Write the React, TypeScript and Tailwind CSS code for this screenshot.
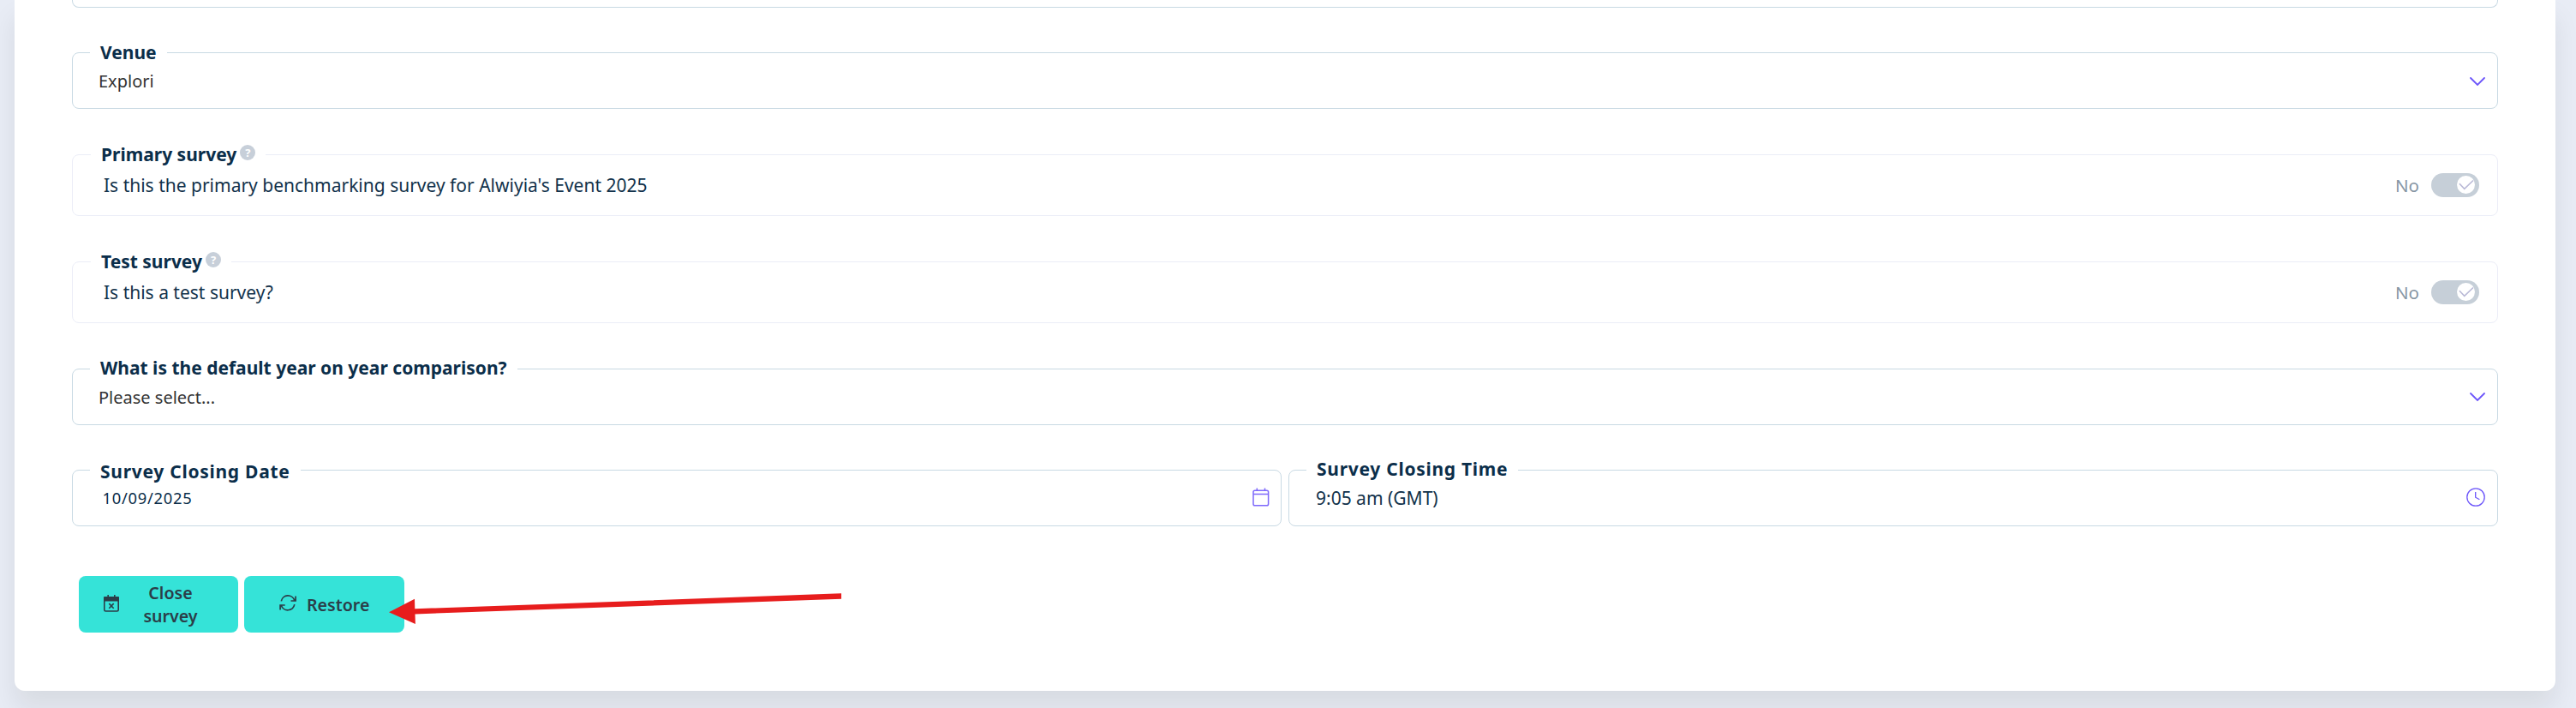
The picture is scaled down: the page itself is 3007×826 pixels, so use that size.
// src/components/sections/SurveySettings.tsx
import React from 'react';

type FieldProps = {
  label: string;
  labelClass?: string;
  className?: string;
  help?: boolean;
  children: React.ReactNode;
};

function Field({ label, labelClass = 'leading-[26px]', className = 'h-[79px] border-[#c8d9e3]', help, children }: FieldProps) {
  return (
    <fieldset className={`min-w-0 border rounded-lg ${className}`}>
      <legend className={`px-3 h-[27px] text-[21px] text-[#0b2e4a] ${help ? 'ml-[21px]' : 'ml-5'}`}>
        <span className="flex items-start h-[27px]">
          <span className={`whitespace-nowrap font-bold ${labelClass}`}>{label}</span>
          {help && (
            <span className="ml-1 mt-[2px] w-[18px] h-[18px] rounded-full bg-[#c7cfd9] text-white text-[13px] leading-[18px] font-bold text-center">
              ?
            </span>
          )}
        </span>
      </legend>
      {children}
    </fieldset>
  );
}

function Select({ value, iconClass }: { value: string; iconClass: string }) {
  return (
    <div className="flex items-start justify-between pt-[6px] pl-[30px] pr-[14px] text-[20px] leading-[28px] text-[#333]">
      <span>{value}</span>
      <svg className={iconClass} width="18" height="10" viewBox="0 0 18 10" fill="none" stroke="#6c55fa" strokeWidth="1.8" strokeLinecap="round">
        <path d="M1 1l8 8 8-8" />
      </svg>
    </div>
  );
}

function Toggle({ text }: { text: string }) {
  return (
    <div className="flex items-center justify-between pt-2 pl-9 pr-[21px] text-[21px] leading-[28px] text-[#12324b]">
      <span>{text}</span>
      <div className="flex items-center">
        <span className="mr-[14px] text-[20.5px] text-[#8796a4]">No</span>
        <span className="flex items-start justify-end w-14 h-7 pt-[3px] pr-[5px] rounded-full bg-[#c6cfd8]">
          <span className="w-[21px] h-[21px] rounded-full bg-white">
            <svg width="21" height="21" viewBox="0 0 21 21" fill="none" stroke="#b9b9d6" strokeWidth="1.6">
              <path d="M3 9.2l5.7 6.2L19 5.5" />
            </svg>
          </span>
        </span>
      </div>
    </div>
  );
}

export default function App() {
  return (
    <div className="relative h-[826px] overflow-hidden bg-[#e8ecf5] pl-[17px] pr-6 font-['Noto_Sans',sans-serif]">
      <div className="h-[806px] px-[67px] bg-white rounded-b-[12px] shadow-[0_20px_30px_rgba(20,20,0,0.08)]">
        <div className="h-[9px] border border-t-0 border-[#c8d9e3] rounded-b-lg" />

        <div className="flex flex-col gap-10 pt-[39px]">
          <Field label="Venue">
            <Select value="Explori" iconClass="mt-[9px]" />
          </Field>
          <Field label="Primary survey" help className="h-[85px] border-[#ebedf7]">
            <Toggle text="Is this the primary benchmarking survey for Alwiyia's Event 2025" />
          </Field>
          <Field label="Test survey" help className="h-[85px] border-[#ebedf7]">
            <Toggle text="Is this a test survey?" />
          </Field>
          <Field label="What is the default year on year comparison?" labelClass="leading-[24px]">
            <Select value="Please select..." iconClass="mt-[8px]" />
          </Field>
        </div>

        <div className="grid grid-cols-2 gap-2 pt-[39px]">
          <Field label="Survey Closing Date" labelClass="leading-[30px] tracking-[0.72px]">
            <div className="flex items-start justify-between pt-[5px] pl-[34.5px] pr-[13px] text-[18.4px] leading-[28px] text-[#0b2e4a]">
              <span className="tracking-[0.72px]">10/09/2025</span>
              <svg className="mt-[2px]" width="20" height="22" viewBox="0 0 20 22" fill="none" stroke="#7e69fb" strokeWidth="1.5">
                <rect x="1" y="3.2" width="17.6" height="17.6" rx="1.8" />
                <path d="M1 7.6h17.6M5.3 0.5v3M14.5 0.5v3" />
              </svg>
            </div>
          </Field>
          <Field label="Survey Closing Time" labelClass="leading-[24px] tracking-[0.72px]">
            <div className="flex items-start justify-between pt-[5px] pl-[31px] pr-[14px] text-[21px] leading-[28px] text-[#12324b]">
              <span>9:05 am (GMT)</span>
              <svg className="mt-[2px]" width="22" height="22" viewBox="0 0 22 22" fill="none" stroke="#6c55fa" strokeWidth="1.3">
                <circle cx="11" cy="11" r="10.2" />
                <path d="M10.7 5v6.2l4.7 2.6" />
              </svg>
            </div>
          </Field>
        </div>

        <div className="flex gap-[7px] pt-[58px] pl-2 text-[19.6px] leading-[27px] font-semibold text-[#2b3e48]">
          <button className="flex items-center w-[186px] h-[66px] pl-[29px] rounded-lg bg-[#35e3d8]">
            <svg className="mb-[3px]" width="18" height="20" viewBox="0 0 18 20" fill="none" stroke="#2b3e48" strokeWidth="1.6">
              <rect x="0.8" y="2.8" width="16.4" height="16.2" rx="1.6" />
              <path d="M0.8 3h16.4v3.6H0.8z" fill="#2b3e48" />
              <path d="M5.2 0v3M12.8 0v3" />
              <path d="M6.3 10.1l5.4 5.6M11.7 10.1l-5.4 5.6" />
            </svg>
            <span className="w-[66px] ml-[27px] text-center">Close survey</span>
          </button>
          <button className="flex items-center w-[187px] h-[66px] pl-[41px] rounded-lg bg-[#35e3d8]">
            <svg className="mb-[3px]" width="20" height="19" viewBox="0 0 20 19" fill="none" stroke="#2b3e48" strokeWidth="1.7">
              <path d="M2.3 7.4A8 8 0 0 1 17.8 6.6M19.1 1.4v5.6h-5.6" />
              <path d="M17.8 11.2A8 8 0 0 1 2.3 12.2M1.1 17.6v-5.6h5.6" />
            </svg>
            <span className="ml-3">Restore</span>
          </button>
        </div>
      </div>

      {/* arrow pointing at the restore button */}
      <svg className="absolute left-[450px] top-[685px]" width="540" height="50" viewBox="450 685 540 50" fill="#e71d1d">
        <path d="M454 714.3L484 698.7L484.3 710.3L982.1 692.3L982.1 698.8L484.5 716.4L484.9 728Z" />
      </svg>
    </div>
  );
}
